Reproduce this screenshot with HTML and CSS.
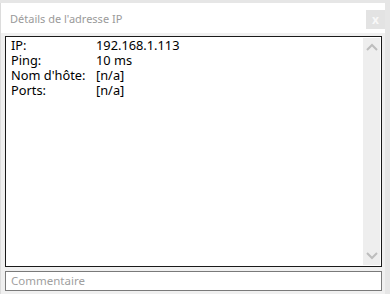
FILE: index.html
```html
<!DOCTYPE html>
<html>
<head>
<meta charset="utf-8">
<link rel="stylesheet" href="styles.css">
</head>
<body>
<div class="window">
  <div class="titlebar">
    <span class="title">Détails de l'adresse IP</span>
    <span class="close">x</span>
  </div>
  <div class="content">
    <div class="details">
      <div class="info">
        <div class="row"><span class="label">IP:</span><span>192.168.1.113</span></div>
        <div class="row"><span class="label">Ping:</span><span>10 ms</span></div>
        <div class="row"><span class="label">Nom d'hôte:</span><span>[n/a]</span></div>
        <div class="row"><span class="label">Ports:</span><span>[n/a]</span></div>
      </div>
      <div class="scrollbar">
        <svg width="16" height="10" viewBox="0 0 16 10"><path d="M3 8 L8 3 L13 8" fill="none" stroke="#bdbdbd" stroke-width="2"/></svg>
        <svg width="16" height="10" viewBox="0 0 16 10"><path d="M3 2 L8 7 L13 2" fill="none" stroke="#bdbdbd" stroke-width="2"/></svg>
      </div>
    </div>
    <div class="comment">Commentaire</div>
  </div>
</div>
</body>
</html>
```
FILE: styles.css
```css
html, body { margin: 0; padding: 0; }
body {
  background: #e6e6e6;
  width: 390px;
  height: 294px;
  overflow: hidden;
  font-family: "Noto Sans", "Open Sans", sans-serif;
  font-size: 12px;
}
.window {
  margin: 3px 5px 0 0;
  width: 385px;
  height: 291px;
  background: #f0f0f0;
  display: flex;
  flex-direction: column;
  border-left: 1px solid #dcdcdc;
  box-sizing: border-box;
}
.titlebar {
  height: 30px;
  background: #ffffff;
  display: flex;
  align-items: center;
  justify-content: space-between;
  padding-left: 9px;
  flex: none;
}
.title { color: #9a9a9a; font-size: 11px; }
.close {
  width: 19px;
  height: 19px;
  background: #e3e3e3;
  color: #f8f8f8;
  font-size: 12px;
  font-weight: bold;
  display: flex;
  align-items: center;
  justify-content: center;
  align-self: flex-start;
  margin-top: 7px;
}
.content {
  flex: 1;
  display: flex;
  flex-direction: column;
  padding: 3px 3px 0 4px;
  gap: 4px;
}
.details {
  height: 231px;
  border: 1px solid #1a1a1a;
  background: #fff;
  display: flex;
  box-sizing: border-box;
  padding: 1px;
}
.info {
  flex: 1;
  padding: 0 0 0 4px;
  color: #000;
  font-size: 12.8px;
  line-height: 15px;
}
.row { display: flex; }
.label { width: 85px; }
.scrollbar {
  width: 17px;
  background: #eeeeee;
  display: flex;
  flex-direction: column;
  justify-content: space-between;
  align-items: center;
  padding: 4px 0;
}
.scrollbar svg { display: block; }
.comment {
  height: 20px;
  border: 1px solid #7a7a7a;
  background: #fff;
  box-sizing: border-box;
  color: #a0a0a0;
  font-size: 11.5px;
  padding-left: 5px;
  line-height: 18px;
}
```
